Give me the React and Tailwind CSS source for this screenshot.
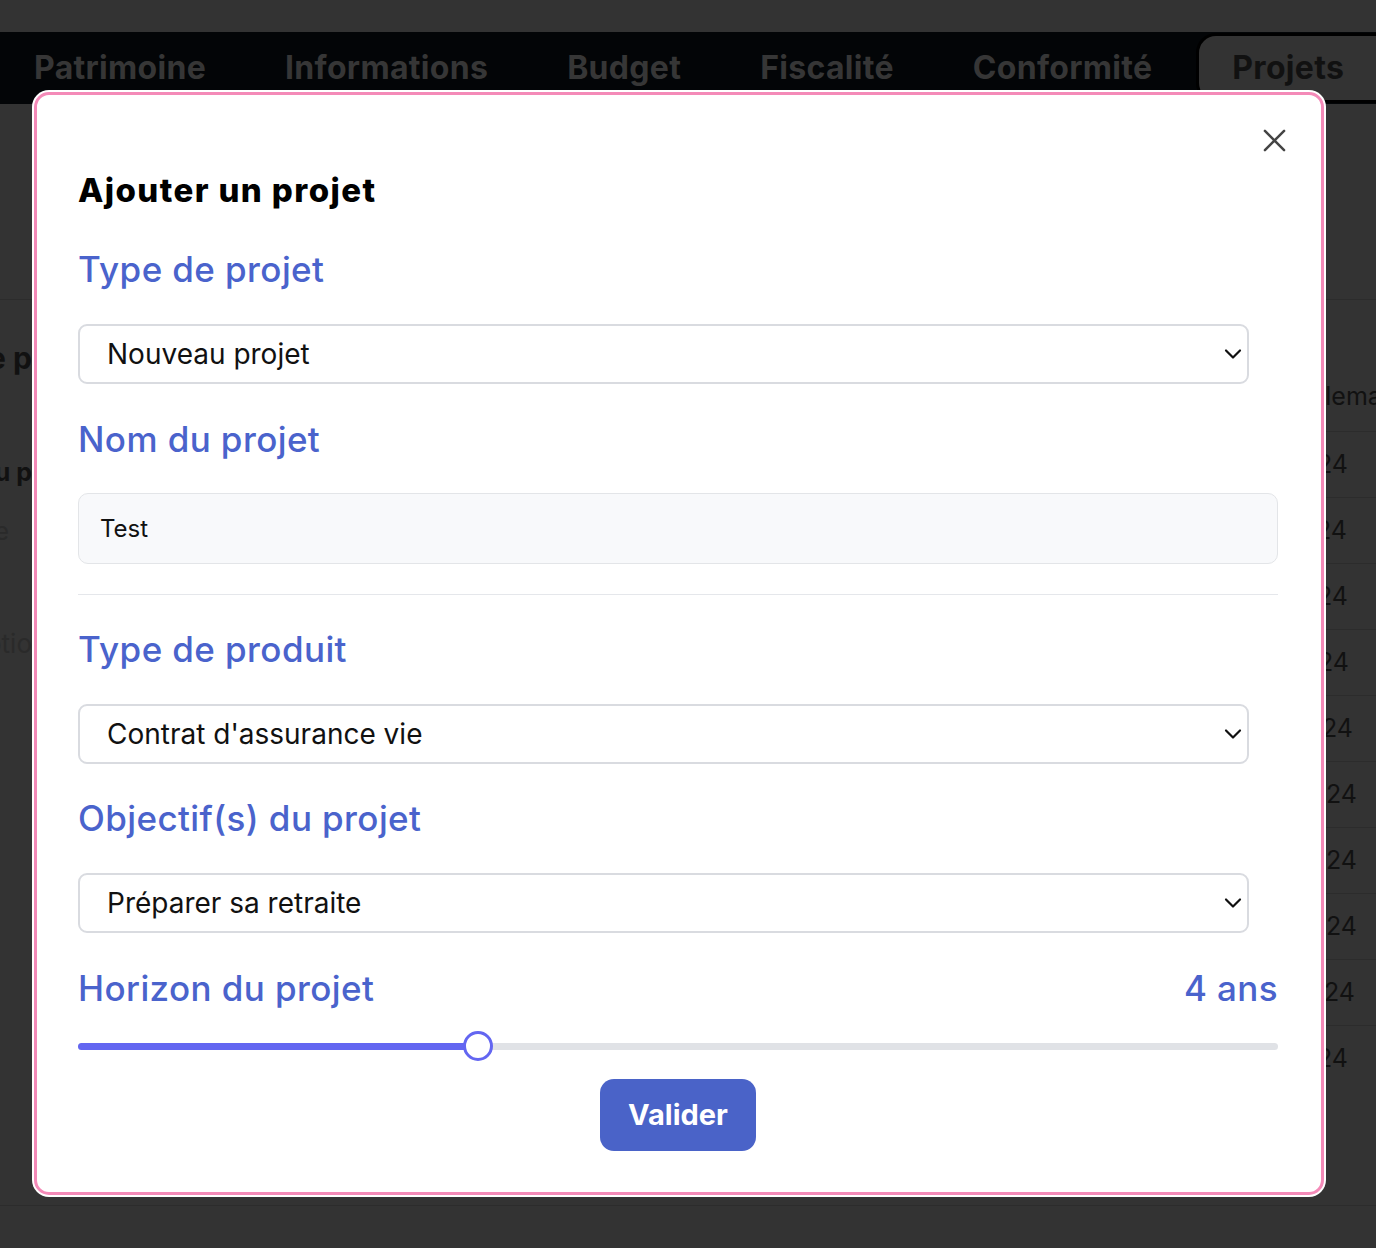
import React from "react";

function Chevron() {
  return (
    <svg width="18" height="11" viewBox="0 0 18 11" className="absolute right-[5px] top-1/2 -translate-y-1/2" fill="none">
      <path d="M2 2l7 7 7-7" stroke="#111" strokeWidth="2.2" strokeLinecap="round" strokeLinejoin="round" />
    </svg>
  );
}

function Select({ value }) {
  return (
    <div className="relative w-[1171px] h-[60px] border-2 border-[#d9dbe0] rounded-[9px] flex items-center pl-[27px] text-[28px] text-[#111]">
      {value}
      <Chevron />
    </div>
  );
}

function Label({ children, className = "" }) {
  return <div className={`h-[40px] leading-[40px] text-[35px] tracking-[0.4px] font-medium text-[#4a63cc] ${className}`}>{children}</div>;
}

const rows = [
  { t: "2024", pr: "pr-[28px]" },
  { t: "2024", pr: "pr-[29px]" },
  { t: "2024", pr: "pr-[28px]" },
  { t: "2024", pr: "pr-[27px]" },
  { t: "2024", pr: "pr-[23px]" },
  { t: "2024", pr: "pr-[19px]" },
  { t: "2024", pr: "pr-[19px]" },
  { t: "2024", pr: "pr-[19px]" },
  { t: "2024", pr: "pr-[21px]" },
  { t: "2024", pr: "pr-[28px]" },
];

export default function App() {
  return (
    <div className="relative w-[1376px] h-[1248px] overflow-hidden bg-[#333333] font-['Inter',sans-serif]">
      <div className="h-[32px]" />
      <div className="h-[72px] bg-[#030507] flex items-center pl-[34px]">
        <div className="flex items-center gap-[79px] text-[32px] font-bold tracking-[0.3px] text-[#363636]">
          <span>Patrimoine</span>
          <span>Informations</span>
          <span>Budget</span>
          <span>Fiscalité</span>
          <span>Conformité</span>
        </div>
        <div className="ml-[44px] h-[70px] w-[200px] shrink-0 rounded-[20px] border-[3px] border-black bg-[#333333] flex items-center pl-[33px] text-[32px] font-bold tracking-[0.3px] text-[#111111] -mt-[1px]">
          Projets
        </div>
      </div>
      <div className="h-[196px] border-b border-[#2c2c2c]" />
      <div className="h-[905px] flex justify-between">
        <div className="w-[32px] flex flex-col">
          <div className="mt-[43px] h-[30px] flex justify-end whitespace-nowrap text-[30px] leading-[30px] font-bold text-[#111]">Liste de p</div>
          <div className="mt-[84px] h-[30px] flex justify-end whitespace-nowrap text-[25px] leading-[30px] font-bold text-[#111]">Montant du p</div>
          <div className="mt-[29px] h-[30px] flex justify-end pr-[23px] whitespace-nowrap text-[25px] leading-[30px] text-[#2a2a2a]">Date</div>
          <div className="mt-[83px] h-[30px] flex justify-end whitespace-nowrap text-[26px] leading-[30px] text-[#2a2a2a]">Descriptio</div>
        </div>
        <div className="w-[60px] flex flex-col">
          <div className="h-[131px] flex items-end pb-[20px] whitespace-nowrap text-[25px] leading-[30px] text-[#111]">
            <span className="-ml-[46px]">Problematique</span>
          </div>
          {rows.map((r, i) => (
            <div key={i} className={`h-[66px] flex items-center justify-end whitespace-nowrap text-[25px] text-[#111] border-t border-[#2c2c2c] ${r.pr}`}>
              {r.t}
            </div>
          ))}
        </div>
      </div>
      <div className="border-t border-[#2c2c2c]" />

      <div className="absolute left-[34px] top-[92px] w-[1290px] h-[1103px] bg-white border-[3px] border-[#f48ab8] rounded-[15px] ring-2 ring-white pl-[41px] pr-[43px] pt-[75px] flex flex-col">
        <button className="absolute right-[35px] top-[34px] w-[23px] h-[23px]">
          <svg viewBox="0 0 24 24" width="23" height="23" fill="none">
            <path d="M2 2l20 20M22 2L2 22" stroke="#444" strokeWidth="2.6" strokeLinecap="round" />
          </svg>
        </button>
        <div className="h-[40px] leading-[40px] text-[33px] font-extrabold tracking-[1.4px] text-black">Ajouter un projet</div>
        <Label className="mt-[39px]">Type de projet</Label>
        <div className="mt-[35px]"><Select value="Nouveau projet" /></div>
        <Label className="mt-[35px]">Nom du projet</Label>
        <div className="mt-[34px] h-[71px] w-[1200px] bg-[#f8f9fb] border border-[#e3e5e8] rounded-[10px] flex items-center pl-[21px] text-[24px] text-[#111]">
          Test
        </div>
        <div className="mt-[30px] h-px w-[1200px] bg-[#e5e7eb]" />
        <Label className="mt-[34px]">Type de produit</Label>
        <div className="mt-[35px]"><Select value="Contrat d'assurance vie" /></div>
        <Label className="mt-[34px]">Objectif(s) du projet</Label>
        <div className="mt-[35px]"><Select value="Préparer sa retraite" /></div>
        <div className="mt-[35px] flex justify-between w-[1200px]">
          <Label>Horizon du projet</Label>
          <Label>4 ans</Label>
        </div>
        <div className="mt-[23px] relative h-[30px] w-[1200px] flex items-center">
          <div className="h-[7px] w-full rounded-full bg-[#e0e2e6] flex">
            <div className="h-full w-[400px] rounded-full bg-[#6366f1]" />
          </div>
          <div className="absolute left-[385px] top-0 w-[30px] h-[30px] rounded-full bg-white border-[3px] border-[#6366f1]" />
        </div>
        <div className="mt-[18px] w-[1200px] flex justify-center">
          <button className="w-[156px] h-[72px] rounded-[14px] bg-[#4a63c8] text-white text-[29px] font-bold">Valider</button>
        </div>
      </div>
    </div>
  );
}
